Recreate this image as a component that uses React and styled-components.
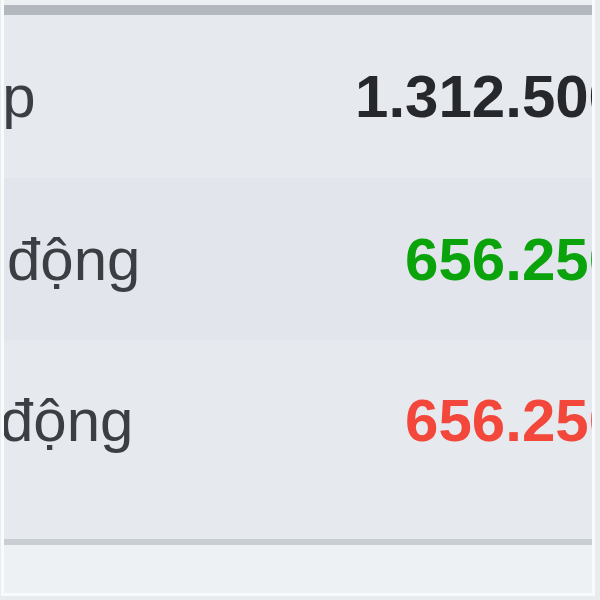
import React from "react";
import styled, { createGlobalStyle } from "styled-components";

const GlobalStyle = createGlobalStyle`
  html, body {
    margin: 0;
    padding: 0;
    background: #e9ecef;
    font-family: "Liberation Sans", Arial, sans-serif;
  }
`;

const Page = styled.div`
  width: 600px;
  height: 600px;
  overflow: hidden;
`;

const Frame = styled.div`
  width: 588px;
  margin-left: 1px;
  border-left: 3px solid #f8fafb;
  border-right: 3px solid #f8fafb;
  border-bottom: 3px solid #f8fafb;
  display: flex;
  flex-direction: column;
  overflow: hidden;
`;

const HeadEdge = styled.div`
  height: 5px;
  background: #eceff2;
  border-bottom: 10px solid #b2b8bd;
`;

const Row = styled.div`
  height: ${(p) => p.$height}px;
  padding-bottom: ${(p) => p.$tail || 0}px;
  background: ${(p) => (p.$shade ? "#e2e5eb" : "#e6e9ed")};
  display: flex;
  align-items: center;
  justify-content: space-between;
  overflow: hidden;
  white-space: nowrap;
`;

const Label = styled.span`
  margin-left: ${(p) => p.$indent}px;
  font-size: 60px;
  color: #3b3e43;
`;

const Value = styled.span`
  margin-right: -30px;
  font-size: 60px;
  font-weight: 700;
  color: ${(p) => p.$color};
`;

const Foot = styled.div`
  height: 48px;
  background: #edf1f4;
  border-top: 6px solid #c9ced2;
`;

const rows = [
  { label: "ập", indent: -35, value: "1.312.500", color: "#26282c", height: 163 },
  { label: "động", indent: 3, value: "656.250", color: "#0aa30c", height: 162, shade: true },
  { label: "động", indent: -4, value: "656.250", color: "#f2473a", height: 160, tail: 39 },
];

export default function App() {
  return (
    <Page>
      <GlobalStyle />
      <Frame>
        <HeadEdge />
        {rows.map((r, i) => (
          <Row key={i} $height={r.height} $tail={r.tail} $shade={r.shade}>
            <Label $indent={r.indent}>{r.label}</Label>
            <Value $color={r.color}>{r.value}</Value>
          </Row>
        ))}
        <Foot />
      </Frame>
    </Page>
  );
}
